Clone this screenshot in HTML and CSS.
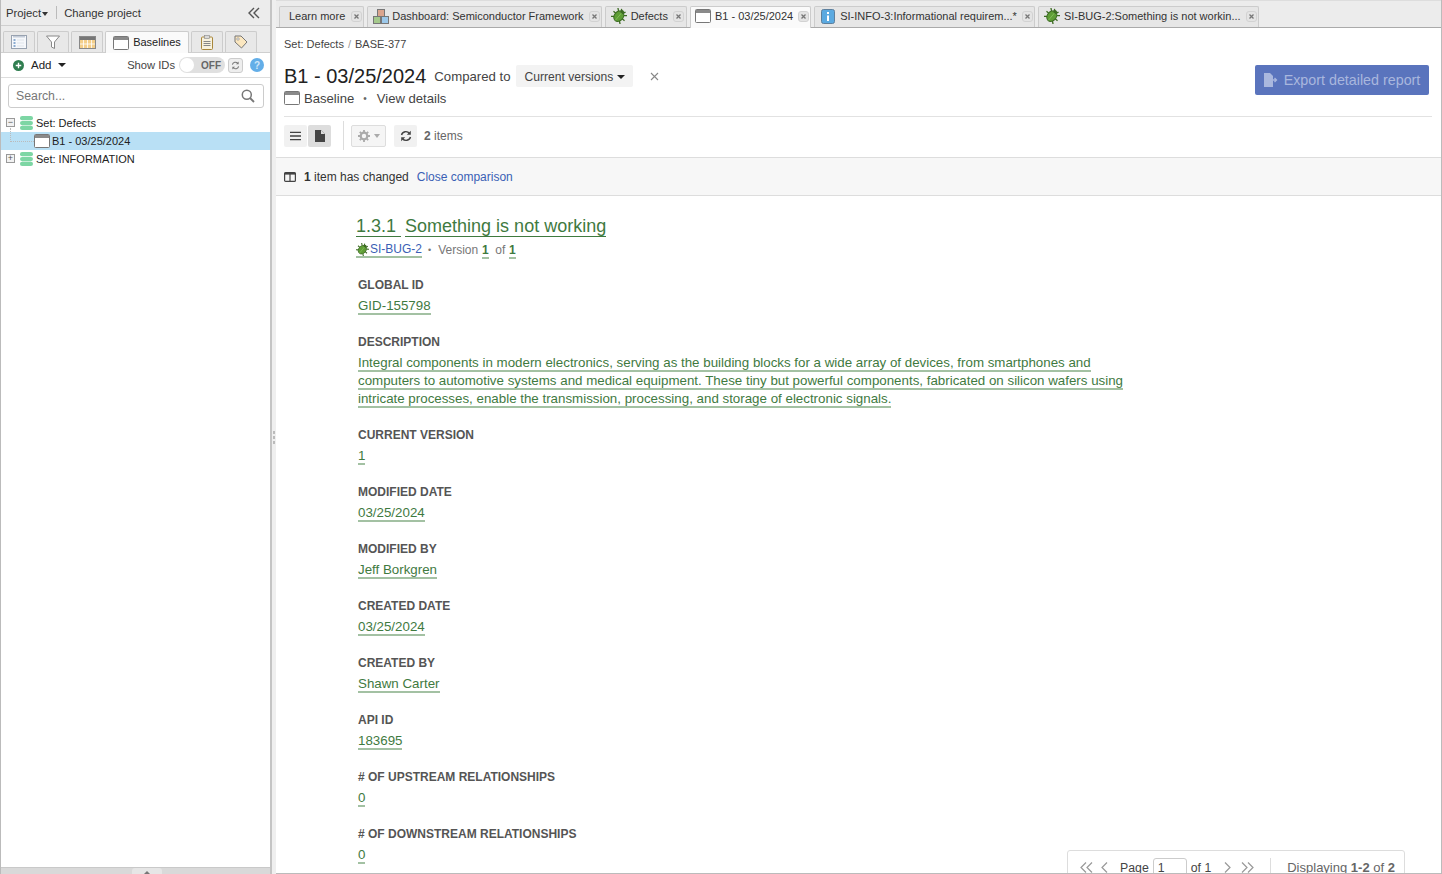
FILE: index.html
```html
<!DOCTYPE html>
<html lang="en">
<head>
<meta charset="utf-8">
<title>B1 - 03/25/2024</title>
<link rel="stylesheet" href="styles.css">
</head>
<body>
<svg class="defs" width="0" height="0" aria-hidden="true">
  <symbol id="bug" viewBox="0 0 16 16">
    <g transform="rotate(40 8 8)" stroke="#3c6b22" fill="none">
      <path d="M4.500 4.500L2 2.500M3.800 8H.8M4.500 11.500L2 13.500M11.500 4.500L14 2.500M12.200 8h3M11.500 11.500L14 13.500M6.500 3L5.500 .8M9.500 3l1-2.200" stroke-width="1.300"/>
      <ellipse cx="8" cy="8.300" rx="4.500" ry="5.700" fill="#5f9e36" stroke-width="1"/>
      <circle cx="8" cy="2.800" r="1.800" fill="#3c6b22" stroke="none"/>
      <path d="M8 4v9.500" stroke="#86c25a" stroke-width=".8"/>
    </g>
  </symbol>
  <symbol id="baseline" viewBox="0 0 16 14">
    <rect x=".5" y=".5" width="15" height="13" rx="1" fill="#fff" stroke="#777"/>
    <rect x="1" y="1" width="14" height="3" fill="#8a8a8a"/>
  </symbol>
  <symbol id="db" viewBox="0 0 13 14">
    <rect x="0" y="0" width="13" height="4.300" rx="2.100" fill="#7dd6a4"/>
    <rect x="0" y="4.900" width="13" height="4.300" rx="2.100" fill="#7dd6a4"/>
    <rect x="0" y="9.700" width="13" height="4.300" rx="2.100" fill="#7dd6a4"/>
  </symbol>
  <symbol id="x" viewBox="0 0 11 11">
    <rect x=".5" y=".5" width="10" height="10" rx="2.500" fill="#e4e4e4" stroke="#d2d2d2"/>
    <path d="M3.500 3.500l4 4M7.500 3.500l-4 4" stroke="#777" stroke-width="1.300"/>
  </symbol>
</svg>

<aside class="sidebar">
  <div class="proj-bar">
    <span class="proj">Project<i class="caret small"></i></span>
    <span class="vsep"></span>
    <span class="proj">Change project</span>
    <svg class="collapse" viewBox="0 0 12 12" width="12" height="12"><path d="M6 1L1 6l5 5M11 1L6 6l5 5" fill="none" stroke="#555" stroke-width="1.400"/></svg>
  </div>
  <div class="side-tabs">
    <span class="stab">
      <svg viewBox="0 0 16 14" width="16" height="14"><rect x=".5" y=".5" width="15" height="13" fill="#f6f8fb" stroke="#98a2b0"/><path d="M2 1h12v1.500H2z" fill="#c4ccd8"/><path d="M2.500 5h2M2.500 8h2M2.500 11h2" stroke="#6a93c4" stroke-width="1.300"/><path d="M6 5h7M6 8h7M6 11h7" stroke="#dfe4ea"/></svg>
    </span>
    <span class="stab">
      <svg viewBox="0 0 14 14" width="14" height="14"><path d="M.5 1h13L8.500 7v6.500l-3-1.500V7z" fill="#fff" stroke="#888"/></svg>
    </span>
    <span class="stab">
      <svg viewBox="0 0 17 13" width="17" height="13"><rect x=".5" y=".5" width="16" height="12" fill="#f4cf8a" stroke="#888"/><rect x="1" y="1" width="15" height="3" fill="#777"/><path d="M4.500 4v8M8.500 4v8M12.500 4v8M1 8h15" stroke="#fff" stroke-width=".8"/></svg>
    </span>
    <span class="stab active">
      <svg width="16" height="14"><use href="#baseline"/></svg>
      <span class="stab-text">Baselines</span>
    </span>
    <span class="stab">
      <svg viewBox="0 0 12 15" width="12" height="15"><rect x=".5" y="2" width="11" height="12.500" rx="1" fill="#f8f2dd" stroke="#a8873c"/><rect x="3.500" y=".5" width="5" height="3" fill="#d9d9d9" stroke="#888" stroke-width=".6"/><path d="M2.500 6.500h7M2.500 8.500h7M2.500 10.500h7" stroke="#888"/></svg>
    </span>
    <span class="stab">
      <svg viewBox="0 0 14 14" width="14" height="14"><path d="M1 1h6l6 6-5.500 6L1 7z" fill="#fbe7c0" stroke="#777"/><circle cx="4" cy="4" r="1.200" fill="#fff" stroke="#777" stroke-width=".6"/></svg>
    </span>
  </div>
  <div class="add-row">
    <svg class="plus" viewBox="0 0 12 12" width="11" height="11"><circle cx="6" cy="6" r="6" fill="#2f7d4f"/><path d="M6 3v6M3 6h6" stroke="#fff" stroke-width="1.500"/></svg>
    <span class="add-label">Add</span>
    <i class="caret dark"></i>
    <span class="spacer"></span>
    <span class="show-ids">Show IDs</span>
    <span class="toggle"><span class="knob"></span><span>OFF</span></span>
    <span class="sync">
      <svg viewBox="0 0 10 10" width="9" height="9"><path d="M1.500 4a3.500 3.500 0 0 1 6-1.500M8.500 6a3.500 3.500 0 0 1-6 1.500" fill="none" stroke="#777" stroke-width="1.200"/><path d="M8.500.5v3h-3zM1.500 9.500v-3h3z" fill="#777"/></svg>
    </span>
    <span class="help">?</span>
  </div>
  <div class="search-row">
    <label class="search">
      <span class="placeholder">Search...</span>
      <svg viewBox="0 0 14 14" width="14" height="14"><circle cx="5.800" cy="5.800" r="4.500" fill="none" stroke="#777" stroke-width="1.500"/><path d="M9 9l4 4" stroke="#777" stroke-width="1.800"/></svg>
    </label>
  </div>
  <ul class="tree">
    <li class="node">
      <span class="exp">&minus;</span>
      <svg class="db" width="13" height="14"><use href="#db"/></svg>
      <span>Set: Defects</span>
    </li>
    <li class="node child selected">
      <svg class="bl" width="16" height="14"><use href="#baseline"/></svg>
      <span>B1 - 03/25/2024</span>
    </li>
    <li class="node">
      <span class="exp">+</span>
      <svg class="db" width="13" height="14"><use href="#db"/></svg>
      <span>Set: INFORMATION</span>
    </li>
  </ul>
  <div class="side-foot"><span class="foot-handle"><i></i></span></div>
</aside>

<div class="splitter"><i></i><i></i><i></i></div>

<main class="main">
  <nav class="doc-tabs">
    <span class="dtab"><span class="dtab-text">Learn more</span><svg class="close" width="11" height="11"><use href="#x"/></svg></span>
    <span class="dtab">
      <svg class="dash" viewBox="0 0 16 15" width="16" height="15"><rect x="4.500" y=".5" width="7" height="7" fill="#dba58e" stroke="#777"/><rect x=".5" y="7.500" width="7" height="7" fill="#a5c98c" stroke="#777"/><rect x="8.500" y="7.500" width="7" height="7" fill="#9cc8ea" stroke="#777"/></svg>
      <span class="dtab-text">Dashboard: Semiconductor Framework</span><svg class="close" width="11" height="11"><use href="#x"/></svg>
    </span>
    <span class="dtab"><svg width="16" height="16"><use href="#bug"/></svg><span class="dtab-text">Defects</span><svg class="close" width="11" height="11"><use href="#x"/></svg></span>
    <span class="dtab active"><svg width="16" height="14"><use href="#baseline"/></svg><span class="dtab-text">B1 - 03/25/2024</span><svg class="close" width="11" height="11"><use href="#x"/></svg></span>
    <span class="dtab"><svg class="info" viewBox="0 0 14 15" width="14" height="15"><rect x=".5" y=".5" width="13" height="14" rx="2" fill="#5aa9e0" stroke="#5d7f9c"/><rect x="6" y="3" width="2" height="2" fill="#fff"/><rect x="6" y="6.500" width="2" height="5.500" fill="#fff"/></svg><span class="dtab-text">SI-INFO-3:Informational requirem...*</span><svg class="close" width="11" height="11"><use href="#x"/></svg></span>
    <span class="dtab"><svg width="16" height="16"><use href="#bug"/></svg><span class="dtab-text">SI-BUG-2:Something is not workin...</span><svg class="close" width="11" height="11"><use href="#x"/></svg></span>
  </nav>

  <header class="head">
    <div class="crumbs"><span>Set: Defects</span><span class="slash">/</span><span>BASE-377</span></div>
    <div class="title-row">
      <div class="title-col">
        <div class="title-line">
          <h1>B1 - 03/25/2024</h1>
          <span class="compared">Compared to</span>
          <span class="versions">Current versions<i class="caret dark"></i></span>
          <svg class="clear" viewBox="0 0 9 9" width="9" height="9"><path d="M1 1l7 7M8 1L1 8" stroke="#888" stroke-width="1.100"/></svg>
        </div>
        <div class="sub-line">
          <svg width="16" height="14"><use href="#baseline"/></svg>
          <span>Baseline</span>
          <span class="dot">&bull;</span>
          <span>View details</span>
        </div>
      </div>
      <button class="export" type="button">
        <svg viewBox="0 0 16 16" width="16" height="16"><path d="M2 1h6l3 3v11H2z" fill="#a9b7de"/><path d="M10 8h4M12.500 6l2 2-2 2" fill="none" stroke="#a9b7de" stroke-width="1.300"/></svg>
        Export detailed report
      </button>
    </div>
  </header>

  <div class="toolbar">
    <span class="tool-group">
      <span class="tool"><svg viewBox="0 0 12 10" width="11" height="10"><path d="M0 1h12M0 5h12M0 9h12" stroke="#444" stroke-width="1.400"/></svg></span>
      <span class="tool on"><svg viewBox="0 0 10 12" width="10" height="12"><path d="M0 0h6l4 4v8H0z" fill="#444"/><path d="M6 0v4h4" fill="#ddd"/></svg></span>
    </span>
    <span class="tool-sep"></span>
    <span class="tool gear">
      <svg viewBox="0 0 12 12" width="12" height="12"><circle cx="6" cy="6" r="3.300" fill="none" stroke="#aaa" stroke-width="2.200"/><path d="M6 0v2.500M6 9.500V12M0 6h2.500M9.500 6H12M1.800 1.800l1.800 1.800M8.400 8.400l1.800 1.800M1.800 10.200l1.800-1.800M8.400 3.600l1.800-1.800" stroke="#aaa" stroke-width="1.800"/></svg>
      <i class="caret pale"></i>
    </span>
    <span class="tool refresh"><svg viewBox="0 0 12 12" width="12" height="12"><path d="M1.500 5a4.500 4.500 0 0 1 8-1.500M10.500 7a4.500 4.500 0 0 1-8 1.500" fill="none" stroke="#444" stroke-width="1.400"/><path d="M10.800.8v4h-4zM1.200 11.200v-4h4z" fill="#444"/></svg></span>
    <span class="count"><b>2</b> items</span>
  </div>

  <div class="notice">
    <svg viewBox="0 0 12 10" width="12" height="10"><rect x=".6" y=".6" width="10.800" height="8.800" rx="1" fill="none" stroke="#444" stroke-width="1.200"/><rect x=".6" y=".6" width="10.800" height="2" fill="#444"/><path d="M6 1v8" stroke="#444" stroke-width="1.200"/></svg>
    <span><b>1</b> item has changed</span>
    <a class="link" href="#">Close comparison</a>
  </div>

  <article class="doc">
    <h2 class="item-title"><span class="chg">1.3.1&nbsp;</span> <span class="chg">Something is not working</span></h2>
    <div class="meta">
      <span class="chg-soft id-link"><svg width="13" height="13"><use href="#bug"/></svg><a class="link" href="#">SI-BUG-2</a></span>
      <span class="dot">&bull;</span>
      <span class="ver">Version <b class="chg-soft num">1</b></span>
      <span>of <b class="chg-soft num">1</b></span>
    </div>
    <section class="field"><h3>GLOBAL ID</h3><p><span class="chg-soft">GID-155798</span></p></section>
    <section class="field"><h3>DESCRIPTION</h3><p class="desc"><span class="chg-soft">Integral components in modern electronics, serving as the building blocks for a wide array of devices, from smartphones and computers to automotive systems and medical equipment. These tiny but powerful components, fabricated on silicon wafers using intricate processes, enable the transmission, processing, and storage of electronic signals.</span></p></section>
    <section class="field"><h3>CURRENT VERSION</h3><p><span class="chg-soft">1</span></p></section>
    <section class="field"><h3>MODIFIED DATE</h3><p><span class="chg-soft">03/25/2024</span></p></section>
    <section class="field"><h3>MODIFIED BY</h3><p><span class="chg-soft">Jeff Borkgren</span></p></section>
    <section class="field"><h3>CREATED DATE</h3><p><span class="chg-soft">03/25/2024</span></p></section>
    <section class="field"><h3>CREATED BY</h3><p><span class="chg-soft">Shawn Carter</span></p></section>
    <section class="field"><h3>API ID</h3><p><span class="chg-soft">183695</span></p></section>
    <section class="field"><h3># OF UPSTREAM RELATIONSHIPS</h3><p><span class="chg-soft">0</span></p></section>
    <section class="field"><h3># OF DOWNSTREAM RELATIONSHIPS</h3><p><span class="chg-soft">0</span></p></section>
  </article>

  <div class="pager">
    <svg class="pg" viewBox="0 0 13 11" width="13" height="11"><path d="M6 .5L1 5.500l5 5M12 .5L7 5.500l5 5" fill="none" stroke="#999" stroke-width="1.200"/></svg>
    <svg class="pg" viewBox="0 0 7 11" width="7" height="11"><path d="M6 .5L1 5.500l5 5" fill="none" stroke="#999" stroke-width="1.200"/></svg>
    <span class="pg-page">Page</span>
    <span class="pg-input">1</span>
    <span class="pg-of">of 1</span>
    <svg class="pg pg-next" viewBox="0 0 7 11" width="7" height="11"><path d="M1 .5l5 5-5 5" fill="none" stroke="#999" stroke-width="1.200"/></svg>
    <svg class="pg" viewBox="0 0 13 11" width="13" height="11"><path d="M1 .5l5 5-5 5M7 .5l5 5-5 5" fill="none" stroke="#999" stroke-width="1.200"/></svg>
    <span class="pg-sep"></span>
    <span class="pg-info">Displaying <b>1-2</b> of <b>2</b></span>
  </div>
</main>
</body>
</html>
```
FILE: styles.css
```css
* { box-sizing: border-box; }
html, body { height: 100%; }
body {
  margin: 0;
  display: flex;
  height: 874px;
  overflow: hidden;
  background: #ececec;
  font-family: "Liberation Sans", Arial, sans-serif;
  font-size: 11px;
  color: #333;
}
.defs { position: absolute; }
svg { flex: none; display: block; }

/* caret */
.caret { display: inline-block; width: 0; height: 0; border-left: 4px solid transparent; border-right: 4px solid transparent; border-top: 4px solid #333; }
.caret.small { border-left-width: 3px; border-right-width: 3px; margin-left: 1px; vertical-align: 1px; }
.caret.dark { border-top-color: #222; }
.caret.pale { border-top-color: #aaa; border-left-width: 3.500px; border-right-width: 3.500px; }

/* sidebar */
.sidebar { width: 272px; flex: none; display: flex; flex-direction: column; border-left: 1px solid #bbb; border-right: 2px solid #c4c4c4; background: #fff; position: relative; }
.proj-bar { height: 26px; flex: none; display: flex; align-items: center; padding: 0 5px; background: #ececec; border-bottom: 1px solid #cfcfcf; color: #333; }
.proj { font-size: 11.300px; }
.vsep { width: 1px; height: 13px; background: #bbb; margin: 0 7px 0 8px; }
.collapse { margin-left: auto; margin-right: 5px; }
.side-tabs { height: 27px; flex: none; display: flex; align-items: flex-end; gap: 2px; padding: 0 0 0 2px; background: #ececec; border-bottom: 1px solid #cfcfcf; }
.stab { height: 21px; width: 32px; display: flex; align-items: center; justify-content: center; gap: 5px; background: #e8e8e8; border: 1px solid #ccc; border-bottom: 0; border-radius: 2px 2px 0 0; }
.stab.active { width: 84px; height: 22px; background: #fafafa; position: relative; top: 1px; font-size: 11px; color: #222; gap: 4px; }
.stab-text { position: relative; top: -1px; }
.add-row { height: 25px; flex: none; display: flex; align-items: center; padding: 0 6px 0 12px; background: #fff; border-bottom: 1px solid #ddd; }
.add-label { font-size: 11.500px; margin: 0 7px 0 7px; color: #222; }
.spacer { flex: 1; }
.show-ids { font-size: 11.200px; color: #444; margin-right: 4px; }
.toggle { width: 46px; height: 16px; border-radius: 8px; background: #e0e0e0; display: flex; align-items: center; justify-content: flex-end; padding-right: 4px; font-size: 10px; font-weight: 700; color: #666; position: relative; }
.knob { position: absolute; left: 1px; top: 1px; width: 14px; height: 14px; border-radius: 50%; background: #fff; }
.sync { width: 15px; height: 15px; margin-left: 3px; border: 1px solid #ccc; border-radius: 3px; background: #eee; display: flex; align-items: center; justify-content: center; }
.help { width: 14px; height: 14px; margin-left: 7px; border-radius: 50%; background: #63aee8; color: #cfe6f8; font-size: 10px; font-weight: 700; display: flex; align-items: center; justify-content: center; }
.search-row { flex: none; padding: 6px 6px 0 7px; height: 36px; }
.search { height: 24px; display: flex; align-items: center; justify-content: space-between; padding: 0 8px 0 7px; border: 1px solid #ccc; border-radius: 3px; background: #fff; }
.placeholder { font-size: 12.300px; color: #777; }
.tree { list-style: none; margin: 0; padding: 0; flex: 1; }
.node { height: 18px; display: flex; align-items: center; font-size: 11px; color: #222; padding: 0 0 1px 5px; white-space: nowrap; position: relative; }
.exp { width: 9px; height: 9px; flex: none; border: 1px solid #999; background: #f2f2f2; color: #555; font-size: 9px; line-height: 6px; text-align: center; margin-right: 5px; }
.db { margin-right: 3px; }
.node.child { padding-left: 33px; gap: 2px; background: #b9e0f5; }
.node.child::before { content: ""; position: absolute; left: 9px; top: -4px; height: 13px; width: 23px; border-left: 1px dotted #bbb; border-bottom: 1px dotted #bbb; }
.side-foot { height: 7px; flex: none; background: #d9d9d9; border-top: 1px solid #c9c9c9; display: flex; justify-content: center; }
.foot-handle { width: 30px; height: 6px; background: #e6e6e6; display: flex; justify-content: center; align-items: flex-end; border-radius: 3px 3px 0 0; position: relative; left: 11px; }
.foot-handle i { border-left: 3px solid transparent; border-right: 3px solid transparent; border-bottom: 3px solid #777; }

.splitter { width: 4px; flex: none; background: #efefef; display: flex; flex-direction: column; justify-content: center; align-items: center; gap: 2px; }
.splitter i { width: 2px; height: 3px; background: #bbb; }

/* main */
.main { flex: 1; min-width: 0; height: 874px; position: relative; display: flex; flex-direction: column; background: #fff; border-right: 1px solid #bbb; border-bottom: 1px solid #bbb; overflow: hidden; }
.doc-tabs { height: 28px; flex: none; display: flex; align-items: flex-end; gap: 3px; padding-left: 3px; background: #ececec; border-top: 1px solid #ddd; border-bottom: 1px solid #aaa; }
.dtab { height: 21px; padding: 0 1px 2px 5px; display: flex; align-items: center; gap: 3px; background: #e6e6e6; border: 1px solid #ccc; border-bottom: 0; border-radius: 2px 2px 0 0; font-size: 11px; color: #333; white-space: nowrap; }
.dtab.active { background: #fafafa; height: 22px; position: relative; top: 1px; padding: 0 1px 3px 4px; }
.dtab-text { padding-left: 1px; }
.dtab:first-child { padding-left: 8px; }
.dash { margin-right: -1px; }
.info { margin-left: 1px; margin-right: 1px; }
.close { margin-left: 2px; }
.dtab:first-child .close { margin-left: 3px; }
.dtab:nth-child(3) { padding-right: 2px; }

.head { flex: none; padding: 10px 12px 0 8px; }
.crumbs { display: flex; gap: 4px; font-size: 11px; line-height: 13px; color: #444; }
.slash { color: #999; }
.title-row { display: flex; justify-content: space-between; align-items: flex-start; margin-top: 13px; }
.title-line { display: flex; align-items: center; height: 24px; }
h1 { margin: 0; font-size: 20px; font-weight: 400; color: #222; }
.compared { font-size: 13.200px; margin-left: 8px; color: #444; }
.versions { margin-left: 5px; height: 22px; padding: 1px 8px 0 9px; display: flex; align-items: center; gap: 4px; font-size: 12.100px; color: #444; background: #f3f3f3; border-radius: 2px; }
.clear { margin-left: 17px; }
.sub-line { display: flex; align-items: center; height: 20px; font-size: 13.100px; color: #444; gap: 4px; }
.sub-line .dot { margin: 0 6px 0 5px; font-size: 10px; color: #666; }
.export { margin-top: 1px; width: 174px; height: 30px; padding: 0 2px 0 0; display: flex; align-items: center; justify-content: center; gap: 6px; border: 0; border-radius: 2px; background: #5a74bd; color: #a9b7de; font-family: inherit; font-size: 14.300px; }

.toolbar { flex: none; margin: 8px 9px 0 8px; height: 41px; padding-top: 8px; border-top: 1px solid #e2e2e2; display: flex; align-items: flex-start; }
.tool-group { display: flex; gap: 1px; }
.tool { width: 23px; height: 22px; background: #f1f1f1; display: flex; align-items: center; justify-content: center; border-radius: 2px; }
.tool.on { background: #ddd; }
.tool-sep { width: 1px; height: 29px; margin: -4px 7px 0 12px; background: #ddd; }
.tool.gear { width: 35px; border: 1px solid #ddd; gap: 4px; background: #f5f5f5; }
.tool.refresh { margin-left: 8px; }
.count { margin-left: 7px; line-height: 23px; font-size: 12px; color: #666; }
.notice { flex: none; height: 39px; padding: 0 0 0 8px; display: flex; align-items: center; gap: 8px; background: #f7f7f7; border-top: 1px solid #ddd; border-bottom: 1px solid #ddd; font-size: 12px; color: #333; }
.link { color: #3a5fb5; text-decoration: none; }

.doc { flex: none; padding: 19px 0 0 80px; width: 860px; color: #3f7a3f; }
.item-title { margin: 0; font-size: 18px; line-height: 22px; font-weight: 400; color: #3f7a3f; }
.chg { border-bottom: 1px solid #3f7a3f; }
.chg + .chg { margin-left: -1px; }
.chg-soft { border-bottom: 2px solid #a3c1a3; }
.meta { display: flex; align-items: center; gap: 6px; margin-top: 5px; height: 16px; font-size: 12px; color: #777; }
.meta .dot { font-size: 9px; }
.id-link { display: flex; align-items: center; gap: 1px; }
.num { color: #3f7a3f; padding: 0 .5px; }
.ver { margin-left: 1px; }
.field { padding-left: 2px; margin-top: 20px; }
.field h3 { margin: 0; font-size: 12px; line-height: 14px; font-weight: 700; color: #555; }
.field p { margin: 5px 0 0; font-size: 13.330px; line-height: 18px; width: 780px; }

.pager { position: absolute; right: 36px; bottom: -8px; width: 338px; height: 31px; display: flex; align-items: center; padding: 4px 0 0 12px; background: #fff; border: 1px solid #ddd; border-radius: 3px 3px 0 0; font-size: 12.300px; color: #444; }
.pg { margin-right: 8px; }
.pg-next { margin-right: 10px; }
.pg-page { margin-left: 4px; }
.pg-input { width: 34px; height: 19px; border: 1px solid #ccc; border-radius: 3px; margin: 0 4px; padding-left: 4px; line-height: 18px; }
.pg-of { margin-right: 13px; }
.pg-sep { width: 1px; height: 20px; background: #ddd; margin: 0 16px 0 8px; }
.pg-info { color: #666; font-size: 13px; }
```
